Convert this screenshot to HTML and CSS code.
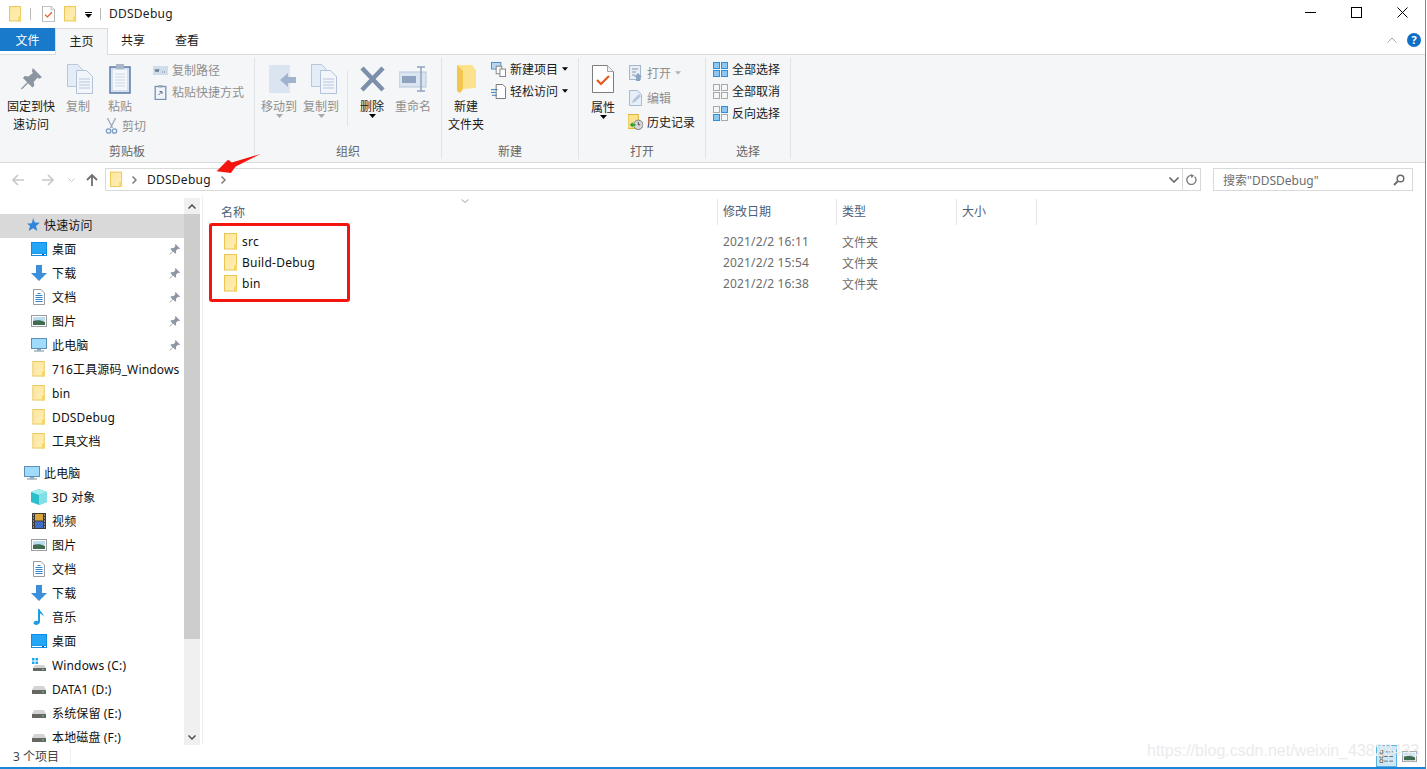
FILE: index.html
```html
<!DOCTYPE html>
<html lang="zh-CN">
<head>
    <meta charset="UTF-8">
    <title>DDSDebug</title>
    <link rel="stylesheet" href="styles.css">
</head>
<body>
    <!-- shared icons -->
    <svg class="sprite" width="0" height="0">
        <defs>
            <linearGradient id="fg" x1="0" y1="0" x2="1" y2="1"><stop offset="0" stop-color="#fde59a"/><stop offset="1" stop-color="#ffefb8"/></linearGradient>
            <symbol id="folder" viewBox="0 0 14 17"><rect x=".5" y=".5" width="12" height="15.5" fill="url(#fg)" stroke="#e9c552"/><path d="M10 16.500v-5l3 -1v6z" fill="#f6d565"/></symbol>
            <symbol id="pin" viewBox="0 0 12 12"><path d="M7 0l5 5-1.500 .8-1-.5-2 2.400 .3 2-1 1-2.400-2.400-3.400 3.400-.5-.5 3.400-3.400-2.300-2.400 1-1 2 .3 2.400-2-.5-1z" fill="#8c96a3"/></symbol>
            <symbol id="desktop" viewBox="0 0 16 14"><rect width="16" height="14" fill="#0f8ce8"/><rect x="1" y="1" width="14" height="10.500" fill="#25a5f5"/><rect x="1" y="12" width="14" height="1" fill="#fff"/><rect x="11" y="12" width="2" height="1" fill="#0f5fa8"/></symbol>
            <symbol id="down" viewBox="0 0 16 16"><path d="M5 0h6v8h5l-8 8-8-8h5z" fill="#3d8fdc"/></symbol>
            <symbol id="doc" viewBox="0 0 12 16"><path d="M.5 .5h7.500l3.500 3.500v11.500h-11z" fill="#fff" stroke="#9a9a9a"/><path d="M2.500 6.500h7M2.500 8.500h7M2.500 10.500h7M2.500 12.500h7" stroke="#2f86d0"/><path d="M4.500 4.500h3" stroke="#2f86d0"/></symbol>
            <symbol id="pic" viewBox="0 0 16 12"><rect x=".5" y=".5" width="15" height="11" fill="#fff" stroke="#9c9c9c"/><rect x="2" y="2" width="12" height="4" fill="#b9dcf0"/><path d="M2 6c3-1 8-1 12 1v3h-12z" fill="#3f6b52"/></symbol>
            <symbol id="pc" viewBox="0 0 16 14"><rect x=".5" y=".5" width="15" height="10" fill="#9fdcfb" stroke="#5d8fb5"/><path d="M6 11h4v1.500h-4z" fill="#8aa6ba"/><path d="M3 12.500h10v1h-10z" fill="#6f8ea5"/></symbol>
            <symbol id="cube" viewBox="0 0 16 16"><path d="M8 0l8 3v10l-8 3-8-3v-10z" fill="#2bbecb"/><path d="M8 6l8-3v10l-8 3z" fill="#7fe0e6"/><path d="M8 0l8 3-8 3-8-3z" fill="#a4eef0"/></symbol>
            <symbol id="film" viewBox="0 0 14 16"><rect width="14" height="16" fill="#3b3b3b"/><rect x="3" y="1" width="8" height="6.500" fill="#d9a43a"/><rect x="3" y="8.500" width="8" height="6.500" fill="#3f6fc4"/><path d="M1 2h1M1 5h1M1 8h1M1 11h1M1 14h1M12 2h1M12 5h1M12 8h1M12 11h1M12 14h1" stroke="#ddd"/></symbol>
            <symbol id="music" viewBox="0 0 12 16"><path d="M5 0h1.500c.5 3 4.500 4 4 8-.5-2-2-3-3.500-3.500v8c0 2-2 3.500-4 3.500-2.500 0-3-2-2-3.200 1-1 2.500-1.300 4-.8z" fill="#1e9be8"/></symbol>
            <symbol id="drive" viewBox="0 0 16 16"><path d="M3 5h10l2 4h-14z" fill="#d4d4d4"/><rect x="1" y="9" width="14" height="4" fill="#666"/><rect x="11" y="10.500" width="2" height="1" fill="#5fe05f"/></symbol>
            <symbol id="chev" viewBox="0 0 6 8"><path d="M1.500 .5l3.500 3.500-3.500 3.500" fill="none" stroke="#7d7d7d" stroke-width="1.500"/></symbol>
            <symbol id="caret" viewBox="0 0 7 4"><path d="M0 0h7l-3.500 4z"/></symbol>
            <symbol id="grid" viewBox="0 0 15 15"><rect x=".5" y=".5" width="6" height="6"/><rect x="8.500" y=".5" width="6" height="6"/><rect x=".5" y="8.500" width="6" height="6"/><rect x="8.500" y="8.500" width="6" height="6"/></symbol>
            <symbol id="tick" viewBox="0 0 22 28"><path d="M.5 .5h15l6 6v21h-21z" fill="#fff" stroke="#7d7d7d"/><path d="M15.500 .5v6h6" fill="#f0f0f0" stroke="#a5a5a5"/><path d="M5 15l4 4 8-8" fill="none" stroke="#e8581c" stroke-width="2.200"/></symbol>
            <symbol id="pages" viewBox="0 0 26 30"><path d="M.5 .5h10l5 5v17h-15z" fill="#e3ecf7" stroke="#b7c6da"/><path d="M9.500 6.500h10l6 6v17h-16z" fill="#f2f6fb" stroke="#b3c2d8"/><path d="M12 15h11M12 18h11M12 21h11M12 24h11" stroke="#b7c6da"/></symbol>
        </defs>
    </svg>

    <div class="window">
        <header class="titlebar">
            <svg class="qat-folder"><use href="#folder"/></svg>
            <i class="qat-sep"></i>
            <svg class="qat-prop"><use href="#tick"/></svg>
            <svg class="qat-folder2"><use href="#folder"/></svg>
            <svg class="qat-drop" viewBox="0 0 7 6"><path d="M0 0h7v1h-7zM0 2h7l-3.500 4z"/></svg>
            <i class="qat-sep qat-sep2"></i>
            <span class="title">DDSDebug</span>
            <div class="winbtns">
                <svg class="winbtn" viewBox="0 0 11 11"><path d="M0 5.500h11" stroke="#000" fill="none"/></svg>
                <svg class="winbtn" viewBox="0 0 11 11"><rect x=".5" y=".5" width="10" height="10" stroke="#000" fill="none"/></svg>
                <svg class="winbtn" viewBox="0 0 11 11"><path d="M.5 .5l10 10M10.500 .5l-10 10" stroke="#000" fill="none"/></svg>
            </div>
        </header>

        <nav class="tabs">
            <span class="tab tab-file">文件</span>
            <span class="tab tab-on">主页</span>
            <span class="tab tab-share">共享</span>
            <span class="tab tab-view">查看</span>
            <div class="tabs-right">
                <svg class="collapse" viewBox="0 0 10 6"><path d="M.5 5.500l4.500-4.500 4.500 4.500" fill="none" stroke="#a8a8a8"/></svg>
                <span class="help">?</span>
            </div>
        </nav>

        <section class="ribbon">
            <div class="group g-clip">
                <div class="group-body">
                    <div class="big w-pin">
                        <div class="big-icon"><svg class="ic-pin"><use href="#pin"/></svg></div>
                        <span>固定到快<br>速访问</span>
                    </div>
                    <div class="big w-copy off">
                        <div class="big-icon"><svg class="ic-pages shift"><use href="#pages"/></svg></div>
                        <span>复制</span>
                    </div>
                    <div class="paste-col">
                        <div class="big off">
                            <div class="big-icon">
                                <svg class="ic-paste" viewBox="0 0 22 30"><rect x="1" y="3" width="20" height="26" fill="#d5e0ef" stroke="#5a7aa5" stroke-width="1.500"/><rect x="4" y="6" width="14" height="20" fill="#f4f7fb"/><path d="M6 10h10M6 13h10M6 16h10M6 19h10M6 22h10" stroke="#ccd7e6"/><rect x="7" y="0" width="8" height="5" fill="#a8b6c8"/></svg>
                            </div>
                            <span>粘贴</span>
                        </div>
                        <div class="row off row-cut">
                            <svg class="small" viewBox="0 0 12 16"><path d="M2 0l5 10M10 0l-5 10" stroke="#9aa8ba" stroke-width="1.300" fill="none"/><circle cx="3" cy="13" r="2.200" fill="none" stroke="#7d9cc6" stroke-width="1.300"/><circle cx="9" cy="13" r="2.200" fill="none" stroke="#7d9cc6" stroke-width="1.300"/></svg>
                            剪切
                        </div>
                    </div>
                    <div class="stack s-clip off">
                        <div class="row">
                            <svg class="small-w" viewBox="0 0 15 9"><rect width="15" height="9" fill="#cfdcec"/><path d="M2 3l1 3 1-3 1 3 1-3M9 6h1M11 6h1" fill="none" stroke="#5b6b80" stroke-width=".8"/></svg>
                            复制路径
                        </div>
                        <div class="row">
                            <svg class="small-w" viewBox="0 0 12 15"><rect x=".7" y="1.500" width="10.600" height="13" fill="#f1f5fa" stroke="#7590b5" stroke-width="1.300"/><path d="M4 10l3-3M5 6.500h2.500v2.500" fill="none" stroke="#60738c"/><rect x="4" y="0" width="4" height="2.500" fill="#9aa8ba"/></svg>
                            粘贴快捷方式
                        </div>
                    </div>
                </div>
                <div class="group-label">剪贴板</div>
            </div>

            <div class="group g-org">
                <div class="group-body">
                    <div class="big w-36 off">
                        <div class="big-icon">
                            <svg class="ic-move" viewBox="0 0 28 28"><rect x="0" y="0" width="21" height="28" fill="#dbe5f2"/><path d="M11 15l8-7v4h8v6h-8v4z" fill="#9fb3cd"/></svg>
                        </div>
                        <span>移动到</span><svg class="drop drop-off"><use href="#caret"/></svg>
                    </div>
                    <div class="big w-36 off m-6">
                        <div class="big-icon"><svg class="ic-pages shift-more"><use href="#pages"/></svg></div>
                        <span>复制到</span><svg class="drop drop-off"><use href="#caret"/></svg>
                    </div>
                    <i class="thin-sep"></i>
                    <div class="big w-del">
                        <div class="big-icon">
                            <svg class="ic-x" viewBox="0 0 25 26"><path d="M2 2l21 22M23 2l-21 22" stroke="#7c8fab" stroke-width="4.500"/></svg>
                        </div>
                        <span class="pad-del">删除</span><svg class="drop"><use href="#caret"/></svg>
                    </div>
                    <div class="big w-36 off m-5">
                        <div class="big-icon">
                            <svg class="ic-ren" viewBox="0 0 28 26"><rect x="0" y="6" width="27" height="15" fill="#dbe5f2" stroke="#b6c5d9"/><rect x="3" y="10" width="14" height="7" fill="#8ea3bf"/><path d="M18 1h8M22 1v24M18 25h8" stroke="#8ea3bf" stroke-width="1.500"/></svg>
                        </div>
                        <span>重命名</span>
                    </div>
                </div>
                <div class="group-label">组织</div>
            </div>

            <div class="group g-new">
                <div class="group-body">
                    <div class="big w-36">
                        <div class="big-icon">
                            <svg class="ic-newfolder" viewBox="0 0 19 28"><path d="M0 0h15l4 5v18l-13 1-3 4-3-2z" fill="#fde28e"/><path d="M0 0l6 6v18l-3 4-3-2z" fill="#f3c64f"/></svg>
                        </div>
                        <span>新建<br>文件夹</span>
                    </div>
                    <div class="stack s-new">
                        <div class="row">
                            <svg class="small-w" viewBox="0 0 16 16"><rect x=".5" y=".5" width="10" height="7" fill="#bcd6ee" stroke="#4d8cc5"/><rect x="5.500" y="4.500" width="6" height="8" fill="#fff" stroke="#808080"/><rect x="9.500" y="7.500" width="6" height="8" fill="#fff" stroke="#808080"/></svg>
                            新建项目<svg class="row-caret"><use href="#caret"/></svg>
                        </div>
                        <div class="row">
                            <svg class="small-w" viewBox="0 0 16 16"><path d="M5.500 .5h7l3 3v12h-10z" fill="#fff" stroke="#707070"/><path d="M0 6h7M0 9h5M1 12h5" stroke="#2f74b8"/></svg>
                            轻松访问<svg class="row-caret"><use href="#caret"/></svg>
                        </div>
                    </div>
                </div>
                <div class="group-label">新建</div>
            </div>

            <div class="group g-open">
                <div class="group-body">
                    <div class="big w-prop">
                        <div class="big-icon"><svg class="ic-tick"><use href="#tick"/></svg></div>
                        <span class="pad-prop">属性</span><svg class="drop"><use href="#caret"/></svg>
                    </div>
                    <div class="stack s-open">
                        <div class="row off">
                            <svg class="small" viewBox="0 0 13 16"><rect x=".5" y=".5" width="11" height="14" fill="#e8eef6" stroke="#a7b7cb"/><path d="M3 4h6M3 7h4M3 10h3" stroke="#8698b0"/><path d="M9 8l4 4h-2v4h-4v-4h-2z" fill="#8ba5c5"/></svg>
                            打开<svg class="row-caret caret-off"><use href="#caret"/></svg>
                        </div>
                        <div class="row off">
                            <svg class="small" viewBox="0 0 13 16"><path d="M.5 .5h8l4 4v11h-12z" fill="#e6eef8" stroke="#a9bbd2"/><path d="M3 13l1-3 6-6 2 2-6 6z" fill="#b5c5da"/></svg>
                            编辑
                        </div>
                        <div class="row">
                            <svg class="small" viewBox="0 0 16 16"><rect x="0" y="0" width="11" height="15" fill="#fde28e" stroke="#d8b53a"/><circle cx="11" cy="11" r="5" fill="#d6d6d6" stroke="#7a7a7a"/><path d="M11 8v3h2" stroke="#444" fill="none"/><path d="M2 11l3-3v2h3v2h-3v2z" fill="#2f9e2f"/></svg>
                            历史记录
                        </div>
                    </div>
                </div>
                <div class="group-label">打开</div>
            </div>

            <div class="group g-sel">
                <div class="group-body">
                    <div class="stack s-sel">
                        <div class="row"><svg class="small-w sel-all"><use href="#grid"/></svg>全部选择</div>
                        <div class="row"><svg class="small-w sel-none"><use href="#grid"/></svg>全部取消</div>
                        <div class="row">
                            <svg class="small-w" viewBox="0 0 15 15"><rect x=".5" y=".5" width="6" height="6" fill="none" stroke="#a9a9a9"/><rect x="8.500" y=".5" width="6" height="6" fill="#8cc8f2" stroke="#2f8fd8"/><rect x=".5" y="8.500" width="6" height="6" fill="#8cc8f2" stroke="#2f8fd8"/><rect x="8.500" y="8.500" width="6" height="6" fill="none" stroke="#a9a9a9"/></svg>
                            反向选择
                        </div>
                    </div>
                </div>
                <div class="group-label">选择</div>
            </div>
        </section>

        <section class="addressbar">
            <svg class="nav-arrow" viewBox="0 0 12 12"><path d="M12 6h-11M6 1l-5 5 5 5" fill="none" stroke="#c8c8c8" stroke-width="1.600"/></svg>
            <svg class="nav-arrow nav-fwd" viewBox="0 0 12 12"><path d="M0 6h11M6 1l5 5-5 5" fill="none" stroke="#c8c8c8" stroke-width="1.600"/></svg>
            <svg class="nav-recent" viewBox="0 0 7 4"><path d="M.5 .5l3 3 3-3" fill="none" stroke="#c8c8c8"/></svg>
            <svg class="nav-arrow nav-up" viewBox="0 0 12 12"><path d="M6 12v-11M1 6l5-5 5 5" fill="none" stroke="#6f6f6f" stroke-width="1.800"/></svg>
            <div class="address">
                <svg class="addr-folder"><use href="#folder"/></svg>
                <svg class="addr-chev first"><use href="#chev"/></svg>
                <span class="crumb">DDSDebug</span>
                <svg class="addr-chev"><use href="#chev"/></svg>
                <svg class="addr-more" viewBox="0 0 10 6"><path d="M.5 .5l4.500 4.500 4.500-4.500" fill="none" stroke="#6d6d6d" stroke-width="1.600"/></svg>
                <div class="addr-refresh">
                    <svg viewBox="0 0 12 12"><path d="M9.500 3a5 5 0 1 1-3-1.500" fill="none" stroke="#7d7d7d" stroke-width="1.500"/><path d="M5 0l4 1.500-3 3z" fill="#7d7d7d"/></svg>
                </div>
            </div>
            <div class="search">
                <span>搜索"DDSDebug"</span>
                <svg viewBox="0 0 12 12"><circle cx="7.500" cy="4.500" r="3.300" fill="none" stroke="#6d6d6d" stroke-width="1.500"/><path d="M5 7l-4 4" stroke="#6d6d6d" stroke-width="2"/></svg>
            </div>
        </section>

        <main class="content">
            <aside class="sidebar">
                <ul class="tree">
                    <li class="item root active"><svg class="ic" viewBox="0 0 16 14"><path d="M9 0l1.800 4.500 5 .3-3.800 3.200 1.300 5-4.300-2.700-4.300 2.700 1.300-5-3-2.500h3l2-.5z" fill="#2f86d8"/></svg>快速访问</li>
                    <li class="item"><svg class="ic"><use href="#desktop"/></svg>桌面<svg class="pinned"><use href="#pin"/></svg></li>
                    <li class="item"><svg class="ic"><use href="#down"/></svg>下载<svg class="pinned"><use href="#pin"/></svg></li>
                    <li class="item"><svg class="ic"><use href="#doc"/></svg>文档<svg class="pinned"><use href="#pin"/></svg></li>
                    <li class="item"><svg class="ic"><use href="#pic"/></svg>图片<svg class="pinned"><use href="#pin"/></svg></li>
                    <li class="item"><svg class="ic"><use href="#pc"/></svg>此电脑<svg class="pinned"><use href="#pin"/></svg></li>
                    <li class="item"><svg class="ic"><use href="#folder"/></svg>716工具源码_Windows</li>
                    <li class="item"><svg class="ic"><use href="#folder"/></svg>bin</li>
                    <li class="item"><svg class="ic"><use href="#folder"/></svg>DDSDebug</li>
                    <li class="item"><svg class="ic"><use href="#folder"/></svg>工具文档</li>
                    <li class="item root gap"><svg class="ic"><use href="#pc"/></svg>此电脑</li>
                    <li class="item"><svg class="ic"><use href="#cube"/></svg>3D 对象</li>
                    <li class="item"><svg class="ic"><use href="#film"/></svg>视频</li>
                    <li class="item"><svg class="ic"><use href="#pic"/></svg>图片</li>
                    <li class="item"><svg class="ic"><use href="#doc"/></svg>文档</li>
                    <li class="item"><svg class="ic"><use href="#down"/></svg>下载</li>
                    <li class="item"><svg class="ic"><use href="#music"/></svg>音乐</li>
                    <li class="item"><svg class="ic"><use href="#desktop"/></svg>桌面</li>
                    <li class="item"><svg class="ic" viewBox="0 0 16 16"><path d="M1 1h2.500v2.500h-2.500zM4.500 1h2.500v2.500h-2.500zM1 4.500h2.500v2.500h-2.500zM4.500 4.500h2.500v2.500h-2.500z" fill="#19a8f0"/><path d="M4 8h9l2 3h-13z" fill="#d4d4d4"/><rect x="2" y="11" width="13" height="3" fill="#666"/><rect x="11" y="12" width="2" height="1" fill="#5fe05f"/></svg>Windows (C:)</li>
                    <li class="item"><svg class="ic"><use href="#drive"/></svg>DATA1 (D:)</li>
                    <li class="item"><svg class="ic"><use href="#drive"/></svg>系统保留 (E:)</li>
                    <li class="item"><svg class="ic"><use href="#drive"/></svg>本地磁盘 (F:)</li>
                </ul>
            </aside>
            <div class="scrollbar">
                <div class="sb-btn"><svg viewBox="0 0 8 5"><path d="M.5 4.500l3.500-3.500 3.500 3.500" fill="none" stroke="#505050" stroke-width="1.500"/></svg></div>
                <div class="sb-thumb"></div>
                <div class="sb-rest"></div>
                <div class="sb-btn"><svg viewBox="0 0 8 5"><path d="M.5 .5l3.500 3.500 3.500-3.500" fill="none" stroke="#505050" stroke-width="1.500"/></svg></div>
            </div>
            <div class="files">
                <div class="file-head">
                    <span class="col-name">名称<svg class="sort" viewBox="0 0 8 4"><path d="M.5 .5l3.500 3 3.500-3" fill="none" stroke="#a0a0a0"/></svg></span>
                    <span class="col-date">修改日期</span>
                    <span class="col-type">类型</span>
                    <span class="col-size">大小</span>
                </div>
                <div class="file-row">
                    <span class="col-name"><svg class="ic"><use href="#folder"/></svg>src</span>
                    <span class="col-date">2021/2/2 16:11</span>
                    <span class="col-type">文件夹</span>
                </div>
                <div class="file-row">
                    <span class="col-name"><svg class="ic"><use href="#folder"/></svg>Build-Debug</span>
                    <span class="col-date">2021/2/2 15:54</span>
                    <span class="col-type">文件夹</span>
                </div>
                <div class="file-row">
                    <span class="col-name"><svg class="ic"><use href="#folder"/></svg>bin</span>
                    <span class="col-date">2021/2/2 16:38</span>
                    <span class="col-type">文件夹</span>
                </div>
            </div>
        </main>

        <footer class="statusbar">
            <span class="count">3 个项目</span>
            <span class="watermark">https://blog.csdn.net/weixin_43828433</span>
            <div class="viewbtn viewbtn-on">
                <svg viewBox="0 0 15 14"><path d="M.5 .5h3v3h-3zM.5 5.500h3v3h-3zM.5 10.500h3v3h-3z" fill="#fff" stroke="#666"/><path d="M5 2h4M10.500 2h4M5 7h4M10.500 7h4M5 12h4M10.500 12h4" stroke="#666"/></svg>
            </div>
            <div class="viewbtn">
                <svg viewBox="0 0 16 12"><use href="#pic" width="16" height="12"/></svg>
            </div>
        </footer>
    </div>

    <!-- red annotations drawn on top of the window -->
    <div class="mark-box"></div>
    <svg class="mark-arrow" viewBox="0 0 48 22"><path d="M0 18l12-12 4 3 30-9-26 13-5 7z" fill="#f5150f"/></svg>
</body>
</html>
```

FILE: styles.css
```css
* {
    box-sizing: border-box;
}

html, body {
    margin: 0;
    height: 100%;
    overflow: hidden;
    background: #fff;
}

body {
    font-family: "Noto Sans", "Noto Sans CJK SC", sans-serif;
    font-size: 12px;
    color: #1a1a1a;
}

.sprite {
    position: absolute;
}

svg {
    display: block;
    flex: none;
}

.window {
    width: 1426px;
    height: 769px;
    display: flex;
    flex-direction: column;
    border-right: 1px solid #4d93c9;
    border-bottom: 2px solid #1a86d9;
}

/* title bar */
.titlebar {
    height: 27px;
    display: flex;
    align-items: center;
    flex: none;
}

.qat-folder {
    width: 13px;
    height: 16px;
    margin-left: 9px;
}

.qat-sep {
    width: 1px;
    height: 12px;
    background: #b9b9b9;
    margin-left: 8px;
}

.qat-prop {
    width: 13px;
    height: 16px;
    margin-left: 11px;
}

.qat-folder2 {
    width: 13px;
    height: 16px;
    margin-left: 9px;
}

.qat-drop {
    width: 7px;
    height: 6px;
    margin-left: 8px;
    margin-top: 2px;
}

.qat-sep2 {
    margin-left: 8px;
}

.title {
    margin-left: 8px;
    letter-spacing: .25px;
    color: #222;
}

.winbtns {
    margin-left: auto;
    display: flex;
    gap: 35px;
    margin-right: 17px;
    align-self: flex-start;
    margin-top: 7px;
}

.winbtn {
    width: 11px;
    height: 11px;
}

/* tabs */
.tabs {
    height: 27px;
    display: flex;
    flex: none;
    align-items: flex-start;
    position: relative;
    z-index: 1;
    margin-top: 1px;
}

.tab {
    height: 23px;
    display: flex;
    align-items: center;
    justify-content: center;
    font-size: 12px;
}

.tab-file {
    width: 55px;
    background: #1979ca;
    color: #fff;
}

.tab-on {
    width: 53px;
    height: 27px;
    padding-bottom: 3px;
    background: #f5f6f7;
    border: 1px solid #dadbdc;
    border-bottom: none;
}

.tab-share {
    width: 50px;
}

.tab-view {
    width: 58px;
}

.tabs-right {
    margin-left: auto;
    display: flex;
    align-items: center;
    margin-right: 4px;
    margin-top: 5px;
}

.collapse {
    width: 10px;
    height: 6px;
    margin-right: 10px;
}

.help {
    width: 14px;
    height: 14px;
    border-radius: 50%;
    background: #0f6fc6;
    color: #fff;
    font-weight: 700;
    font-size: 11px;
    line-height: 14px;
    text-align: center;
}

/* ribbon */
.ribbon {
    height: 109px;
    flex: none;
    display: flex;
    margin-top: -1px;
    padding-top: 3px;
    padding-bottom: 3px;
    background: #f5f6f7;
    border-top: 1px solid #dadbdc;
    border-bottom: 1px solid #dadbdc;
}

.group {
    display: flex;
    flex-direction: column;
    border-right: 1px solid #e1e3e6;
}

.g-clip { width: 255px; }
.g-org { width: 187px; }
.g-new { width: 137px; }
.g-open { width: 127px; }
.g-sel { width: 85px; }

.group-body {
    height: 85px;
    display: flex;
}

.group-label {
    height: 16px;
    line-height: 18px;
    text-align: center;
    color: #666;
}

.big {
    display: flex;
    flex-direction: column;
    align-items: center;
    padding-top: 5px;
    line-height: 18px;
    text-align: center;
    flex: none;
}

.big-icon {
    height: 32px;
    margin-bottom: 3px;
    display: flex;
    align-items: center;
    justify-content: center;
}

.off {
    color: #8f8f8f;
}

.w-pin {
    width: 54px;
    margin-left: 4px;
}

.w-copy {
    width: 40px;
}

.w-36 {
    width: 36px;
}

.g-org .w-36:first-child {
    margin-left: 6px;
}

.g-new .w-36 {
    margin-left: 6px;
}

.m-6 {
    margin-left: 6px;
}

.m-5 {
    margin-left: 5px;
}

.w-del {
    width: 36px;
    margin-left: 6px;
}

.w-prop {
    width: 36px;
    margin-left: 6px;
}

.pad-del,
.pad-prop {
    color: #1a1a1a;
}

.pad-prop {
    margin-top: 1px;
}

.thin-sep {
    width: 1px;
    height: 55px;
    margin: 13px 0 0 8px;
    background: #dfe2e6;
}

.ic-pin {
    width: 22px;
    height: 22px;
}

.ic-pages {
    width: 26px;
    height: 30px;
}

.ic-pages.shift {
    margin-left: 3px;
}

.ic-pages.shift-more {
    margin-left: 6px;
}

.ic-paste {
    width: 22px;
    height: 30px;
}

.ic-move {
    width: 28px;
    height: 28px;
    margin-left: 7px;
}

.ic-x {
    width: 25px;
    height: 26px;
}

.ic-ren {
    width: 28px;
    height: 26px;
}

.ic-newfolder {
    width: 19px;
    height: 28px;
}

.ic-tick {
    width: 22px;
    height: 28px;
}

.drop {
    width: 7px;
    height: 4px;
    margin-top: -2px;
}

.drop-off {
    fill: #a8a8a8;
}

.paste-col {
    width: 50px;
    display: flex;
    flex-direction: column;
}

.paste-col .big {
    width: 44px;
}

.row {
    height: 22px;
    display: flex;
    align-items: center;
    white-space: nowrap;
}

.row-cut {
    margin-left: 7px;
    margin-top: -1px;
}

.small {
    width: 15px;
    height: 16px;
    margin-right: 4px;
}

.row-cut .small {
    width: 13px;
}

.small-w {
    width: 15px;
    height: 15px;
    margin-right: 4px;
}

.stack {
    margin-left: 5px;
}

.s-clip {
    padding-top: 1px;
}

.s-new {
    margin-left: 7px;
}

.s-open {
    margin-left: 7px;
    padding-top: 3px;
}

.s-open .row {
    height: 24.500px;
}

.s-sel {
    margin-left: 7px;
}

.sel-all {
    fill: #8cc8f2;
    stroke: #2f8fd8;
}

.sel-none {
    fill: none;
    stroke: #a9a9a9;
}

.row-caret {
    width: 6px;
    height: 4px;
    margin-left: 4px;
}

.caret-off {
    fill: #b4b4b4;
}

/* address bar */
.addressbar {
    height: 32px;
    flex: none;
    display: flex;
    align-items: center;
    padding: 1px 0 0 12px;
}

.nav-arrow {
    width: 12px;
    height: 12px;
}

.nav-fwd {
    margin-left: 18px;
}

.nav-recent {
    width: 7px;
    height: 4px;
    margin-left: 14px;
}

.nav-up {
    margin-left: 11px;
}

.address {
    width: 1096px;
    height: 23px;
    margin-left: 7px;
    display: flex;
    align-items: center;
    border: 1px solid #d9d9d9;
    padding-left: 4px;
}

.addr-folder {
    width: 13px;
    height: 17px;
}

.addr-chev {
    width: 6px;
    height: 8px;
    margin-left: 9px;
}

.addr-chev.first {
    margin-left: 8px;
}

.crumb {
    margin-left: 10px;
    letter-spacing: .25px;
}

.addr-more {
    width: 10px;
    height: 6px;
    margin-left: auto;
    margin-right: 1px;
}

.addr-refresh {
    width: 18px;
    height: 21px;
    margin-left: 2px;
    border-left: 1px solid #d9d9d9;
    display: flex;
    align-items: center;
    justify-content: center;
}

.addr-refresh svg {
    width: 11px;
    height: 11px;
}

.search {
    width: 200px;
    height: 23px;
    margin-left: 12px;
    border: 1px solid #d9d9d9;
    display: flex;
    align-items: center;
    justify-content: space-between;
    padding: 0 7px 0 9px;
    color: #6d6d6d;
}

.search svg {
    width: 12px;
    height: 12px;
}

/* main area */
.content {
    flex: 1;
    display: flex;
    min-height: 0;
}

.sidebar {
    width: 184px;
    overflow: hidden;
    flex: none;
}

.tree {
    list-style: none;
    margin: 0;
    padding: 19px 0 0;
}

.item {
    height: 24px;
    display: flex;
    align-items: center;
    padding: 0 0 2px 31px;
    white-space: nowrap;
    color: #111;
    letter-spacing: .15px;
}

.item .ic {
    width: 16px;
    height: 16px;
    margin-right: 5px;
}

.item.root {
    padding-left: 24px;
}

.item.root .ic {
    margin-right: 4px;
}

.active {
    background: #d9d9d9;
}

.gap {
    margin-top: 8px;
}

.pinned {
    width: 11px;
    height: 11px;
    margin-left: auto;
    margin-right: 4px;
}

.scrollbar {
    width: 16px;
    flex: none;
    display: flex;
    flex-direction: column;
    background: #f0f0f0;
    margin-top: 3px;
}

.sb-btn {
    height: 16px;
    flex: none;
    display: flex;
    align-items: center;
    justify-content: center;
}

.sb-btn svg {
    width: 8px;
    height: 5px;
}

.sb-thumb {
    height: 425px;
    background: #cdcdcd;
    flex: none;
}

.sb-rest {
    flex: 1;
}

.files {
    flex: 1;
    position: relative;
    margin-left: 2px;
    border-left: 1px solid #f0f0f0;
    padding-left: 18px;
}

.file-head,
.file-row {
    display: flex;
    align-items: center;
}

.file-head {
    height: 26px;
    margin-top: 4px;
    margin-bottom: 6px;
    color: #4c607a;
}

.col-name {
    width: 496px;
    display: flex;
    align-items: center;
    position: relative;
}

.col-date,
.col-type,
.col-size {
    padding-left: 6px;
}

.col-date {
    width: 119px;
    letter-spacing: .15px;
}

.col-type {
    width: 120px;
}

.col-size {
    width: 81px;
}

.file-head .col-date,
.file-head .col-type,
.file-head .col-size {
    height: 26px;
    line-height: 26px;
    padding-left: 5px;
    letter-spacing: 0;
    border-left: 1px solid #e5e5e5;
}

.file-head .col-size {
    border-right: 1px solid #e5e5e5;
}

.sort {
    position: absolute;
    left: 240px;
    top: -4px;
    width: 8px;
    height: 4px;
}

.file-row {
    height: 21px;
    color: #6d6d6d;
}

.file-row .col-name {
    color: #111;
    padding-left: 3px;
    letter-spacing: .25px;
}

.file-row .ic {
    width: 14px;
    height: 17px;
    margin-right: 4px;
}

/* status bar */
.statusbar {
    height: 22px;
    flex: none;
    display: flex;
    align-items: center;
    position: relative;
    padding-left: 13px;
    color: #444;
}

.count {
    width: 58px;
    border-right: 1px solid #efefef;
    height: 16px;
    line-height: 18px;
}

.watermark {
    position: absolute;
    left: 1147px;
    top: -3px;
    font-family: "Liberation Sans", sans-serif;
    font-size: 16px;
    color: #ebebeb;
    white-space: nowrap;
    z-index: 1;
}

.viewbtn {
    width: 21px;
    height: 22px;
    display: flex;
    align-items: center;
    justify-content: center;
    position: relative;
}

.viewbtn svg {
    width: 15px;
    height: 13px;
}

.viewbtn-on {
    margin-left: auto;
    background: #cce8f6;
    border: 1px solid #57b0e6;
}

.viewbtn:last-child {
    margin-left: 2px;
    margin-right: 5px;
}

/* annotations */
.mark-box {
    position: absolute;
    left: 209px;
    top: 223px;
    width: 141px;
    height: 79px;
    border: 3px solid #f5150f;
    border-radius: 3px;
}

.mark-arrow {
    position: absolute;
    left: 216px;
    top: 154px;
    width: 47px;
    height: 21px;
}
```
